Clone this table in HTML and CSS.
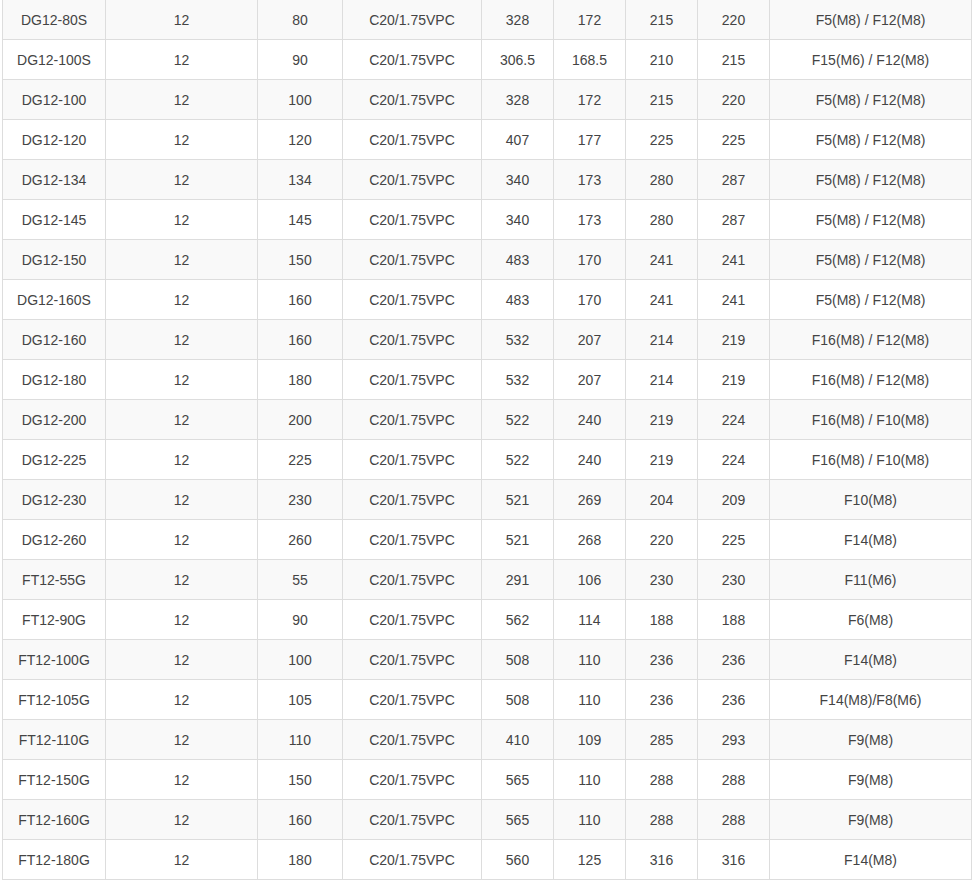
FILE: index.html
```html
<!DOCTYPE html>
<html>
<head>
<meta charset="utf-8">
<link rel="stylesheet" href="styles.css">
</head>
<body>
<table class="spec">
<colgroup>
<col class="c1"><col class="c2"><col class="c3"><col class="c4"><col class="c5"><col class="c6"><col class="c7"><col class="c8"><col class="c9">
</colgroup>
<tbody>
<tr><td>DG12-80S</td><td>12</td><td>80</td><td>C20/1.75VPC</td><td>328</td><td>172</td><td>215</td><td>220</td><td>F5(M8) / F12(M8)</td></tr>
<tr><td>DG12-100S</td><td>12</td><td>90</td><td>C20/1.75VPC</td><td>306.5</td><td>168.5</td><td>210</td><td>215</td><td>F15(M6) / F12(M8)</td></tr>
<tr><td>DG12-100</td><td>12</td><td>100</td><td>C20/1.75VPC</td><td>328</td><td>172</td><td>215</td><td>220</td><td>F5(M8) / F12(M8)</td></tr>
<tr><td>DG12-120</td><td>12</td><td>120</td><td>C20/1.75VPC</td><td>407</td><td>177</td><td>225</td><td>225</td><td>F5(M8) / F12(M8)</td></tr>
<tr><td>DG12-134</td><td>12</td><td>134</td><td>C20/1.75VPC</td><td>340</td><td>173</td><td>280</td><td>287</td><td>F5(M8) / F12(M8)</td></tr>
<tr><td>DG12-145</td><td>12</td><td>145</td><td>C20/1.75VPC</td><td>340</td><td>173</td><td>280</td><td>287</td><td>F5(M8) / F12(M8)</td></tr>
<tr><td>DG12-150</td><td>12</td><td>150</td><td>C20/1.75VPC</td><td>483</td><td>170</td><td>241</td><td>241</td><td>F5(M8) / F12(M8)</td></tr>
<tr><td>DG12-160S</td><td>12</td><td>160</td><td>C20/1.75VPC</td><td>483</td><td>170</td><td>241</td><td>241</td><td>F5(M8) / F12(M8)</td></tr>
<tr><td>DG12-160</td><td>12</td><td>160</td><td>C20/1.75VPC</td><td>532</td><td>207</td><td>214</td><td>219</td><td>F16(M8) / F12(M8)</td></tr>
<tr><td>DG12-180</td><td>12</td><td>180</td><td>C20/1.75VPC</td><td>532</td><td>207</td><td>214</td><td>219</td><td>F16(M8) / F12(M8)</td></tr>
<tr><td>DG12-200</td><td>12</td><td>200</td><td>C20/1.75VPC</td><td>522</td><td>240</td><td>219</td><td>224</td><td>F16(M8) / F10(M8)</td></tr>
<tr><td>DG12-225</td><td>12</td><td>225</td><td>C20/1.75VPC</td><td>522</td><td>240</td><td>219</td><td>224</td><td>F16(M8) / F10(M8)</td></tr>
<tr><td>DG12-230</td><td>12</td><td>230</td><td>C20/1.75VPC</td><td>521</td><td>269</td><td>204</td><td>209</td><td>F10(M8)</td></tr>
<tr><td>DG12-260</td><td>12</td><td>260</td><td>C20/1.75VPC</td><td>521</td><td>268</td><td>220</td><td>225</td><td>F14(M8)</td></tr>
<tr><td>FT12-55G</td><td>12</td><td>55</td><td>C20/1.75VPC</td><td>291</td><td>106</td><td>230</td><td>230</td><td>F11(M6)</td></tr>
<tr><td>FT12-90G</td><td>12</td><td>90</td><td>C20/1.75VPC</td><td>562</td><td>114</td><td>188</td><td>188</td><td>F6(M8)</td></tr>
<tr><td>FT12-100G</td><td>12</td><td>100</td><td>C20/1.75VPC</td><td>508</td><td>110</td><td>236</td><td>236</td><td>F14(M8)</td></tr>
<tr><td>FT12-105G</td><td>12</td><td>105</td><td>C20/1.75VPC</td><td>508</td><td>110</td><td>236</td><td>236</td><td>F14(M8)/F8(M6)</td></tr>
<tr><td>FT12-110G</td><td>12</td><td>110</td><td>C20/1.75VPC</td><td>410</td><td>109</td><td>285</td><td>293</td><td>F9(M8)</td></tr>
<tr><td>FT12-150G</td><td>12</td><td>150</td><td>C20/1.75VPC</td><td>565</td><td>110</td><td>288</td><td>288</td><td>F9(M8)</td></tr>
<tr><td>FT12-160G</td><td>12</td><td>160</td><td>C20/1.75VPC</td><td>565</td><td>110</td><td>288</td><td>288</td><td>F9(M8)</td></tr>
<tr><td>FT12-180G</td><td>12</td><td>180</td><td>C20/1.75VPC</td><td>560</td><td>125</td><td>316</td><td>316</td><td>F14(M8)</td></tr>
</tbody>
</table>
</body>
</html>
```

FILE: styles.css
```css
html, body {
  background: #ffffff;
}
body {
  margin: -1px 0 0 2px;
  font-family: "Liberation Sans", Arial, sans-serif;
  font-size: 14px;
  color: #444;
}
.spec {
  border-collapse: collapse;
  table-layout: fixed;
  width: 969px;
}
.spec td {
  border: 1px solid #ddd;
  height: 40px;
  padding: 0;
  text-align: center;
  vertical-align: middle;
  line-height: 20px;
  box-sizing: border-box;
}
.spec tr:nth-child(odd) td {
  background: #f9f9f9;
}
.c1 { width: 103px; }
.c2 { width: 152px; }
.c3 { width: 85px; }
.c4 { width: 139px; }
.c5 { width: 72px; }
.c6 { width: 72px; }
.c7 { width: 72px; }
.c8 { width: 72px; }
.c9 { width: 202px; }
```
